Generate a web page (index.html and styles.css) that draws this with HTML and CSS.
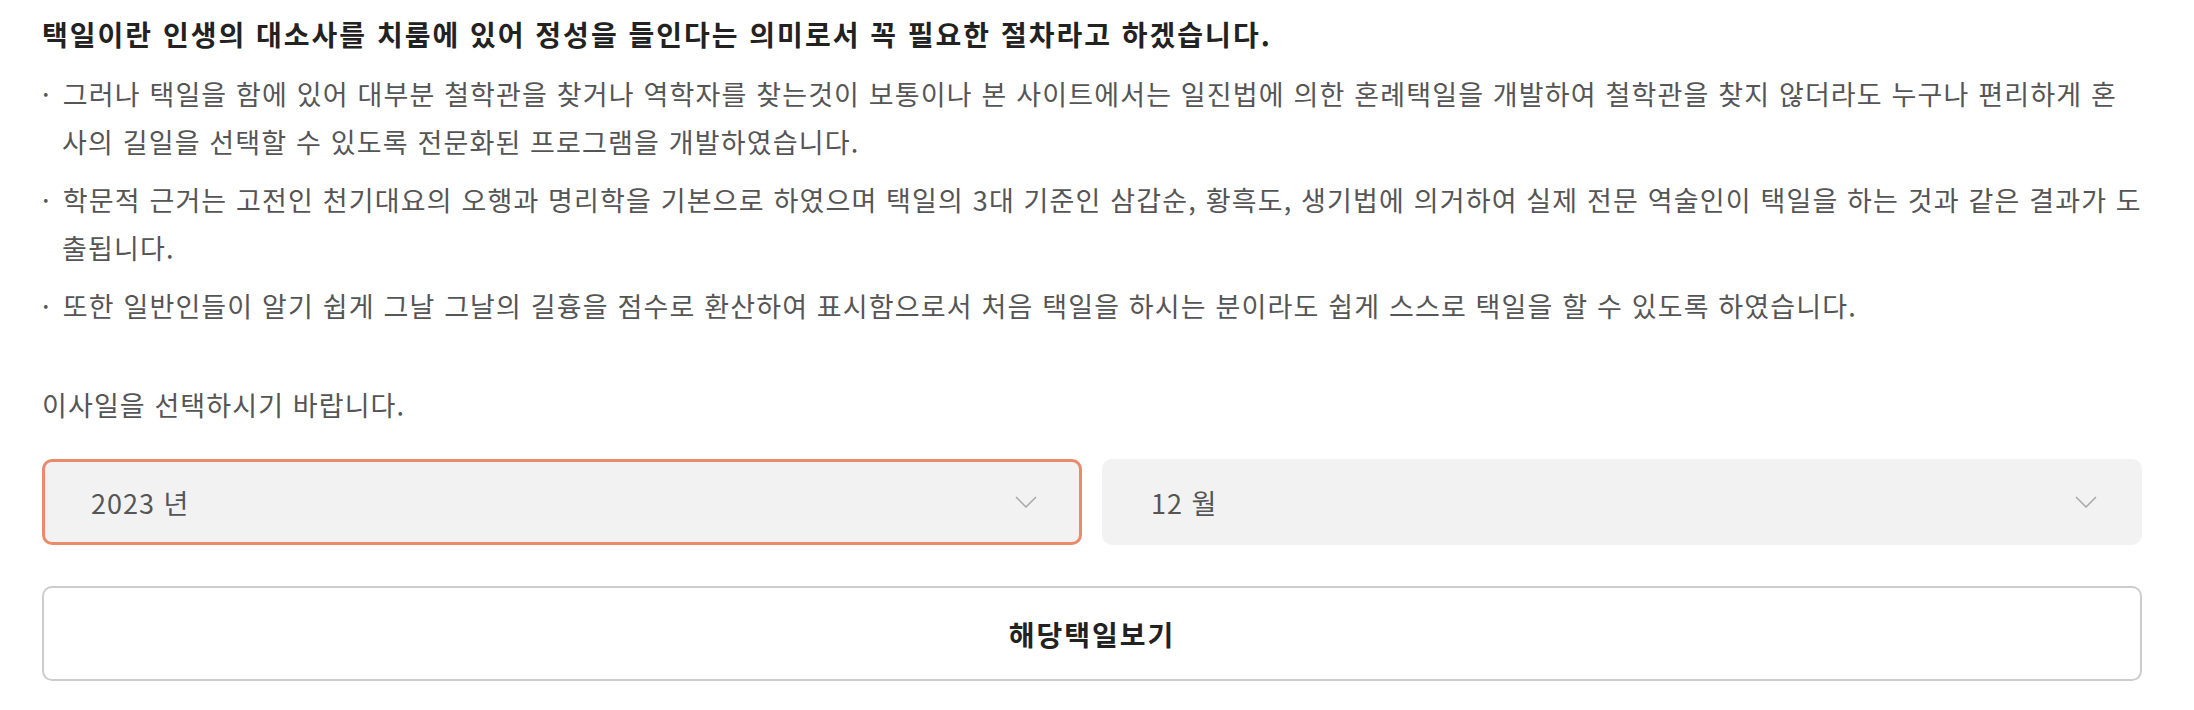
FILE: index.html
```html
<!DOCTYPE html>
<html lang="ko">
<head>
  <meta charset="UTF-8">
  <title>이사택일</title>
  <link rel="stylesheet" href="styles.css">
</head>
<body>
  <div class="container">
    <h1 class="lead">택일이란 인생의 대소사를 치룸에 있어 정성을 들인다는 의미로서 꼭 필요한 절차라고 하겠습니다.</h1>

    <p class="point"><span class="dot">·</span> 그러나 택일을 함에 있어 대부분 철학관을 찾거나 역학자를 찾는것이 보통이나 본 사이트에서는 일진법에 의한 혼례택일을 개발하여 철학관을 찾지 않더라도 누구나 편리하게 혼사의 길일을 선택할 수 있도록 전문화된 프로그램을 개발하였습니다.</p>
    <p class="point"><span class="dot">·</span> 학문적 근거는 고전인 천기대요의 오행과 명리학을 기본으로 하였으며 택일의 3대 기준인 삼갑순, 황흑도, 생기법에 의거하여 실제 전문 역술인이 택일을 하는 것과 같은 결과가 도출됩니다.</p>
    <p class="point"><span class="dot">·</span> 또한 일반인들이 알기 쉽게 그날 그날의 길흉을 점수로 환산하여 표시함으로서 처음 택일을 하시는 분이라도 쉽게 스스로 택일을 할 수 있도록 하였습니다.</p>

    <p class="guide">이사일을 선택하시기 바랍니다.</p>

    <div class="pickers">
      <div class="picker active">
        <span class="value">2023 년</span>
        <svg class="chevron" width="22" height="12" viewBox="0 0 22 12"><polyline points="1,1 11,11 21,1" fill="none" stroke="#a8a8a8" stroke-width="1.5"/></svg>
      </div>
      <div class="picker">
        <span class="value">12 월</span>
        <svg class="chevron" width="22" height="12" viewBox="0 0 22 12"><polyline points="1,1 11,11 21,1" fill="none" stroke="#a8a8a8" stroke-width="1.5"/></svg>
      </div>
    </div>

    <button class="submit">해당택일보기</button>
  </div>
</body>
</html>
```

FILE: styles.css
```css
body {
  margin: 0;
  background: #fff;
  font-family: "Noto Sans CJK KR", "Noto Sans", sans-serif;
  color: #555;
}

.container {
  width: 2100px;
  padding: 10px 0 0 42px;
}

.lead {
  margin: 0 0 12px;
  font-size: 28px;
  line-height: 48px;
  font-weight: bold;
  color: #222;
  letter-spacing: 2px;
}

.point {
  margin: 0 0 10px;
  padding-left: 20px;
  text-indent: -20px;
  font-size: 27px;
  line-height: 48px;
  letter-spacing: 1.15px;
}

.dot {
  display: inline-block;
  width: 12px;
  text-indent: 0;
}

.guide {
  margin: 51px 0 30px;
  font-size: 27px;
  line-height: 48px;
  letter-spacing: 1.1px;
}

.pickers {
  display: grid;
  grid-template-columns: 1fr 1fr;
  gap: 20px;
}

.picker {
  height: 86px;
  box-sizing: border-box;
  display: flex;
  align-items: center;
  justify-content: space-between;
  padding: 0 42px 0 46px;
  background: #f2f2f2;
  border: 3px solid #f2f2f2;
  border-radius: 10px;
  font-size: 27px;
  letter-spacing: 1px;
  color: #555;
}

.picker.active {
  border-color: #e98a6b;
}

.submit {
  display: block;
  width: 100%;
  height: 95px;
  margin-top: 41px;
  background: #fff;
  border: 2px solid #ccc;
  border-radius: 10px;
  font-family: inherit;
  font-size: 28px;
  letter-spacing: 2px;
  font-weight: bold;
  color: #222;
  cursor: pointer;
}
```
